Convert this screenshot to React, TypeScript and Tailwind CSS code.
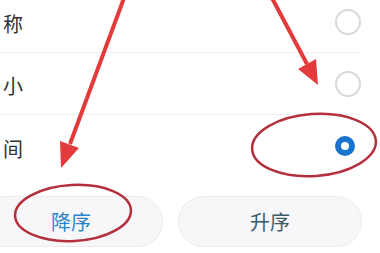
const rows = [
  { label: "称", checked: false },
  { label: "小", checked: false },
  { label: "间", checked: true },
];

function Radio({ checked }: { checked: boolean }) {
  if (checked) {
    return <div className="w-[20px] h-[20px] mr-[6px] rounded-full border-[6px] border-[#1a73cf] bg-white" />;
  }
  return <div className="w-[26px] h-[26px] rounded-full border-2 border-[#d9d9d9] bg-white" />;
}

export default function App() {
  return (
    <div
      className="relative w-[380px] h-[253px] overflow-hidden bg-white"
      style={{ fontFamily: '"Noto Sans CJK SC", "Noto Sans", sans-serif' }}
    >
      <div className="-mt-[9px] w-[362px]">
        {rows.map((r, i) => (
          <div
            key={r.label}
            className={`h-[62px] flex items-center justify-between pl-[3px] pr-[1px] ${i < 2 ? "border-b border-[#efefef]" : ""}`}
          >
            <span className="pt-[5px] text-[20px] text-[#333333]">{r.label}</span>
            <Radio checked={r.checked} />
          </div>
        ))}
      </div>

      <div className="-ml-[21px] mt-[19px] flex gap-[15px]">
        <button className="w-[184px] h-[51px] rounded-full bg-[#f7f6f9] border border-[#ebeaee] text-[20px] text-[#2b86c9]">
          降序
        </button>
        <button className="w-[184px] h-[51px] rounded-full bg-[#f7f6f9] border border-[#ebeaee] text-[20px] text-[#3d5b66]">
          升序
        </button>
      </div>

      <svg className="absolute inset-0 pointer-events-none" width="380" height="253" viewBox="0 0 380 253">
        <line x1="124" y1="-2" x2="70" y2="144" stroke="#e33b3b" strokeWidth="4" />
        <polygon points="61,168 79,148 60,141" fill="#e33b3b" />
        <line x1="272" y1="-2" x2="307" y2="64" stroke="#e33b3b" strokeWidth="4" />
        <polygon points="318,85 316,59 298,69" fill="#e33b3b" />
        <ellipse cx="73" cy="213" rx="58" ry="28" fill="none" stroke="#b5303d" strokeWidth="2.5" transform="rotate(-3 73 213)" />
        <ellipse cx="314" cy="145" rx="62" ry="31" fill="none" stroke="#b5303d" strokeWidth="2.5" transform="rotate(-4 314 145)" />
      </svg>
    </div>
  );
}
